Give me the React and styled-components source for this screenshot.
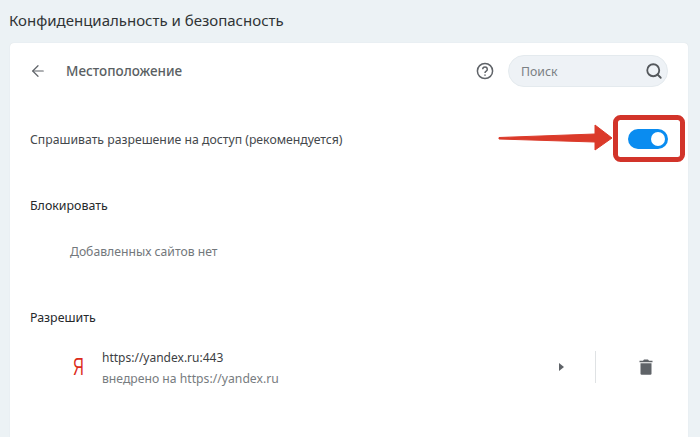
import React from 'react';
import styled, { createGlobalStyle } from 'styled-components';
import { ArrowLeft, Search } from 'lucide-react';

const Global = createGlobalStyle`
    html, body {
        margin: 0;
        padding: 0;
        height: 437px;
        overflow: hidden;
        background-color: #ecf2f5;
    }
`

const Page = styled.div`
    width: 700px;
    height: 437px;
    overflow: hidden;
    box-sizing: border-box;
    padding: 0 12px 0 10px;
    font-family: 'Noto Sans', 'Open Sans', sans-serif;
`

const PageTitle = styled.div`
    height: 43px;
    margin-left: -1px;
    padding-top: 10px;
    box-sizing: border-box;
    font-size: 15px;
    line-height: 20px;
    color: #303436;
`

const Card = styled.div`
    position: relative;
    height: 400px;
    background-color: #ffffff;
    border-radius: 4px 4px 0 0;
    box-shadow: 0 0 1px #cfd6da;
`

const Header = styled.div`
    display: flex;
    align-items: center;
    height: 56px;
    padding: 0 20px;
`

const Back = styled.div`
    display: flex;
    width: 36px;
    margin-left: -1px;
    margin-right: 1px;
    color: #5f6368;
`

const HeaderTitle = styled.div`
    flex: 1;
    font-size: 13.5px;
    font-weight: 500;
    color: #5a5f63;
`

const Help = styled.div`
    display: flex;
    margin-right: 14px;
`

const SearchBox = styled.div`
    display: flex;
    align-items: center;
    justify-content: space-between;
    width: 160px;
    height: 32px;
    box-sizing: border-box;
    padding: 0 4px 0 12px;
    border-radius: 16px;
    background-color: #eef2f6;
    border: 1px solid #e4eaee;
    font-size: 12.3px;
    color: #7b8084;
`

const ToggleRow = styled.div`
    display: flex;
    align-items: center;
    justify-content: space-between;
    height: 48px;
    margin-top: 16px;
    padding: 0 20px;
    font-size: 12.25px;
    color: #44484c;
`

const Toggle = styled.div`
    display: flex;
    align-items: center;
    justify-content: flex-end;
    width: 40px;
    height: 20px;
    box-sizing: border-box;
    padding-right: 3px;
    border-radius: 10px;
    background-color: #0a8cf0;
`

const Knob = styled.div`
    width: 14px;
    height: 14px;
    border-radius: 50%;
    background-color: #ffffff;
`

const SectionTitle = styled.div`
    padding: 0 20px;
    font-size: 12.4px;
    line-height: 18px;
    color: #26292c;
    margin-top: ${(p) => p.$top}px;
`

const Empty = styled.div`
    margin-top: 28px;
    padding-left: 60px;
    font-size: 12.2px;
    line-height: 18px;
    color: #73787c;
`

const SiteRow = styled.div`
    display: flex;
    align-items: center;
    height: 48px;
    margin-top: 16px;
    padding-left: 63px;
`

const Favicon = styled.div`
    width: 29px;
    font-family: 'Liberation Sans', sans-serif;
    font-size: 23px;
    color: #dc2b1a;
    transform: scaleX(0.65);
    transform-origin: left center;
`

const SiteText = styled.div`
    flex: 1;
    padding-top: 1px;
    font-size: 12px;
    line-height: 21px;
    color: #3c4043;
`

const SiteSub = styled.div`
    font-size: 12.2px;
    color: #777c80;
`

const Expand = styled.div`
    width: 0;
    height: 0;
    margin-right: 31px;
    border-left: 5px solid #5f6368;
    border-top: 4px solid transparent;
    border-bottom: 4px solid transparent;
`

const Divider = styled.div`
    width: 1px;
    height: 32px;
    background-color: #dfe2e4;
`

const Trash = styled.div`
    display: flex;
    margin: 0 35px 0 43px;
`

const Callout = styled.svg`
    position: absolute;
    left: 486px;
    top: 72px;
`

const Site = () => {
    return (
        <SiteRow>
            <Favicon>Я</Favicon>
            <SiteText>
                https://yandex.ru:443
                <SiteSub>внедрено на https://yandex.ru</SiteSub>
            </SiteText>
            <Expand />
            <Divider />
            <Trash>
                <svg width="14" height="16" viewBox="0 0 14 16">
                    <path d="M5 0.5h4l1 1.2h3.5v1.6h-13v-1.6h3.5z" fill="#5f6368" />
                    <path d="M1.5 4.2h11v10.3a1.2 1.2 0 0 1-1.2 1.2h-8.6a1.2 1.2 0 0 1-1.2-1.2z" fill="#5f6368" />
                </svg>
            </Trash>
        </SiteRow>
    )
}

const App = () => {
    return (
        <Page>
            <Global />
            <PageTitle>Конфиденциальность и безопасность</PageTitle>
            <Card>
                <Header>
                    <Back><ArrowLeft size={18} strokeWidth={1.6} /></Back>
                    <HeaderTitle>Местоположение</HeaderTitle>
                    <Help>
                        <svg width="18" height="18" viewBox="0 0 18 18" fill="none" stroke="#5f6368" strokeWidth="1.5">
                            <circle cx="9" cy="9" r="7.6" />
                            <path d="M6.7 7.2a2.3 2.3 0 1 1 3.5 2c-.8.5-1.2.9-1.2 1.8" />
                            <path d="M9 12.4v1.4" />
                        </svg>
                    </Help>
                    <SearchBox>
                        Поиск
                        <Search size={18} strokeWidth={2.4} color="#54585c" />
                    </SearchBox>
                </Header>
                <ToggleRow>
                    Спрашивать разрешение на доступ (рекомендуется)
                    <Toggle><Knob /></Toggle>
                </ToggleRow>
                <SectionTitle $top={34}>Блокировать</SectionTitle>
                <Empty>Добавленных сайтов нет</Empty>
                <SectionTitle $top={48}>Разрешить</SectionTitle>
                <Site />
                <Callout width="190" height="48" viewBox="0 0 190 48">
                    <path d="M3 22.5L99 19V10L116 23L99 35V27L3 24Z" fill="#db3a2a" stroke="#db3a2a" strokeLinejoin="round" />
                    <rect x="119.5" y="2.5" width="67" height="42" rx="5" fill="none" stroke="#d2342a" strokeWidth="5" />
                </Callout>
            </Card>
        </Page>
    )
}

export default App;
